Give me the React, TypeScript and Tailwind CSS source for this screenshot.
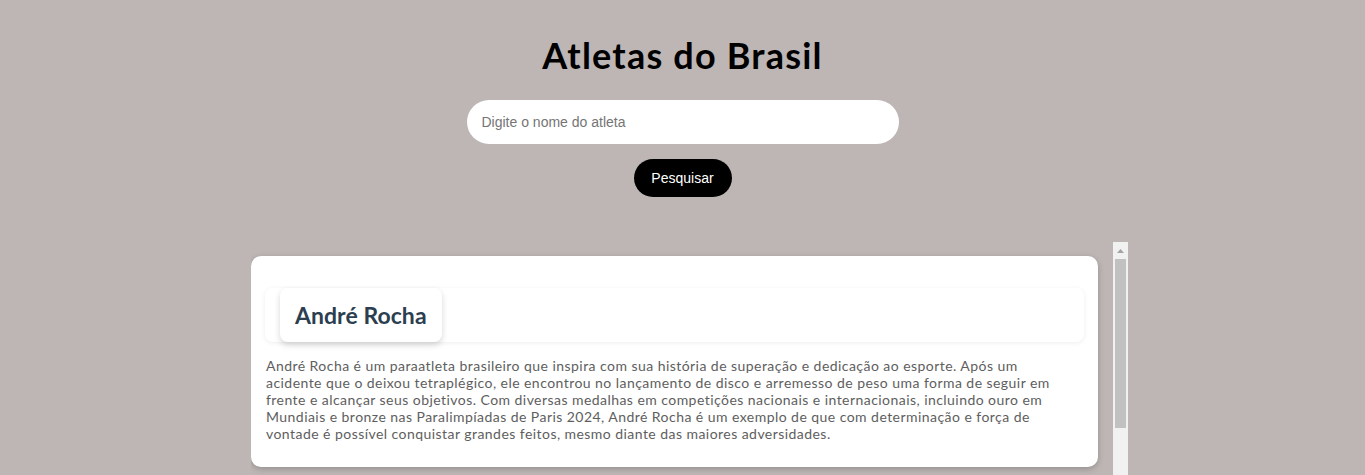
import React from "react";

const lines = [
  "André Rocha é um paraatleta brasileiro que inspira com sua história de superação e dedicação ao esporte. Após um",
  "acidente que o deixou tetraplégico, ele encontrou no lançamento de disco e arremesso de peso uma forma de seguir em",
  "frente e alcançar seus objetivos. Com diversas medalhas em competições nacionais e internacionais, incluindo ouro em",
  "Mundiais e bronze nas Paralimpíadas de Paris 2024, André Rocha é um exemplo de que com determinação e força de",
  "vontade é possível conquistar grandes feitos, mesmo diante das maiores adversidades.",
];

export default function App() {
  return (
    <div className="min-h-[475px] bg-[#bdb6b5] pt-[34px] font-['Lato',sans-serif]">
      <h1 className="text-center text-[36px] font-bold leading-[43px] tracking-[1.2px] text-black">
        Atletas do Brasil
      </h1>
      <div className="mt-[23px] flex flex-col items-center">
        <input
          type="text"
          placeholder="Digite o nome do atleta"
          className="h-[44px] w-[432px] rounded-full bg-white pl-[15px] font-['Liberation_Sans',Arial,sans-serif] text-[14px] text-black outline-none placeholder:text-[#757575]"
        />
        <button className="mt-[15px] h-[38px] w-[98px] rounded-full bg-black font-['Liberation_Sans',Arial,sans-serif] text-[14px] text-white">
          Pesquisar
        </button>
      </div>
      <div className="mt-[45px] flex justify-center">
        <div className="ml-[14px] flex h-[400px] w-[877px]">
          <div className="w-[862px] overflow-hidden">
            <div className="mt-[14px] w-[847px] rounded-[10px] bg-white px-[14px] pb-[25px] pt-[32px] shadow-[0_2px_6px_rgba(0,0,0,0.22)]">
              <div className="flex rounded-[8px] bg-white pl-[15px] shadow-[0_1px_5px_rgba(0,0,0,0.07)]">
                <div className="flex h-[54px] items-center rounded-[8px] bg-white px-[15px] shadow-[0_3px_6px_rgba(0,0,0,0.16)]">
                  <h2 className="text-[23px] font-bold tracking-[0.05px] text-[#2c3e50]">André Rocha</h2>
                </div>
              </div>
              <p className="mt-[15px] pl-[1px] text-[14px] leading-[17px] tracking-[0.45px] text-[#5e5e5e]">
                {lines.map((l, i) => (
                  <span key={i} className="block whitespace-nowrap">
                    {l}
                  </span>
                ))}
              </p>
            </div>
          </div>
          <div className="flex w-[15px] flex-col bg-[#f1f1f1]">
            <div className="flex h-[17px] items-center justify-center">
              <svg width="7" height="4" viewBox="0 0 7 4">
                <polygon points="3.5,0 7,4 0,4" fill="#a3a3a3" />
              </svg>
            </div>
            <div className="mx-[2px] h-[169px] bg-[#c1c1c1]" />
          </div>
        </div>
      </div>
    </div>
  );
}
